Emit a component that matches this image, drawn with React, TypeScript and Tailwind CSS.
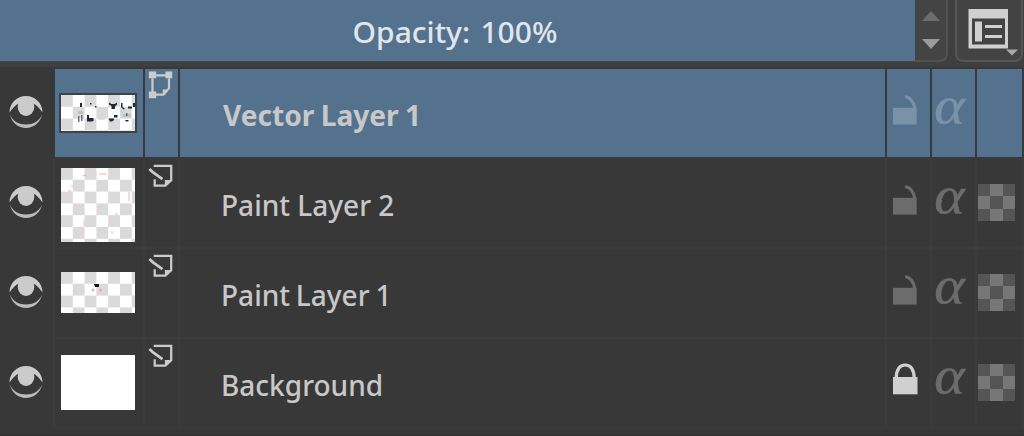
import clsx from 'clsx';
import type { ReactNode } from 'react';

type LayerKind = 'vector' | 'paint';

interface Layer {
  name: string;
  kind: LayerKind;
  selected?: boolean;
  locked?: boolean;
  thumb: ReactNode;
  nameClass: string;
}

function EyeIcon() {
  return (
    <svg aria-hidden="true" className="w-[34px] h-[34px] -mt-[2px]" viewBox="0 0 34 34" fill="none">
      <path d="M0.500 17.500C0.500 8 8 1 17 1s16.500 7 16.500 16.500C30 12.500 27.500 10 24 8.500H10C6.500 10 4 12.500 0.500 17.500z" fill="#cbcbcb" />
      <ellipse cx="17" cy="12" rx="8.300" ry="9" fill="#cbcbcb" />
      <path d="M0.800 19.500C3 28 9.500 33 17 33s14-5 16.200-13.500C30 26.500 24 29.500 17 29.500S4 26.500 0.800 19.500z" fill="#bcbcbc" />
    </svg>
  );
}

function VectorIcon() {
  return (
    <svg aria-hidden="true" className="w-[34px] h-[34px]" viewBox="0 0 34 34" fill="none">
      <path d="M8 6h17M7.700 9v16M24.700 9v10.500L19 26H10" stroke="#cbcbcb" strokeWidth="2.300" />
      <path d="M18.300 26v-5.500h6z" fill="#cbcbcb" />
      <path d="M4 2h7.500v7H4zM21 2h7v7h-7zM4 22.700h7.500v7H4z" fill="#cbcbcb" />
    </svg>
  );
}

function PaintIcon() {
  return (
    <svg aria-hidden="true" className="w-[34px] h-[34px]" viewBox="0 0 34 34" fill="none">
      <path d="M9 6.500h18v14.800l-6 5.500H10v-6.500" stroke="#cbcbcb" strokeWidth="2.300" />
      <path d="M20.500 27v-6H27z" fill="#cbcbcb" />
      <path d="M4.500 9.800L8 13l10 7.300" stroke="#cbcbcb" strokeWidth="2.800" />
    </svg>
  );
}

function LockIcon({ locked, selected }: { locked?: boolean; selected?: boolean }) {
  return (
    <svg
      aria-hidden="true"
      className={clsx('block w-[26px] h-[34px]', locked ? 'text-[#d0d0d0]' : selected ? 'text-[#7a91a8]' : 'text-[#6c6c6c]')}
      viewBox="0 0 26 34"
      fill="none"
    >
      {locked ? (
        <>
          <rect x="1" y="15" width="24.500" height="17.300" fill="currentColor" />
          <path d="M4.200 16C4.500 7 8 3 13.200 3s8.700 4 9 13" stroke="currentColor" strokeWidth="3.200" />
        </>
      ) : (
        <>
          <rect x="1" y="15.800" width="23.700" height="16.800" fill="currentColor" />
          <path d="M13.200 4.500c5 1 8.500 5 9.500 12" stroke="currentColor" strokeWidth="3.200" />
        </>
      )}
    </svg>
  );
}

function InheritIcon() {
  return (
    <div className="grid grid-cols-3 w-[37px] h-[37px] shrink-0 -mt-px">
      {[0, 1, 2, 3, 4, 5, 6, 7, 8].map(i => (
        <div key={i} className={i % 2 ? 'bg-[#777777]' : 'bg-[#555555]'} />
      ))}
    </div>
  );
}

// transparency grid behind every thumbnail
function Thumb({ id, height, className, children }: { id: string; height: number; className?: string; children?: ReactNode }) {
  return (
    <svg aria-hidden="true" className={clsx('shrink-0', className)} width={74} height={height} viewBox={`0 0 74 ${height}`}>
      <defs>
        <pattern id={id} width="23.600" height="23.600" patternUnits="userSpaceOnUse">
          <rect width="23.600" height="23.600" fill="#ffffff" />
          <path d="M0 0h11.800v11.800H0zM11.800 11.800h11.800v11.800H11.800z" fill="#dadada" />
        </pattern>
      </defs>
      <rect width="74" height={height} fill={`url(#${id})`} />
      {children}
    </svg>
  );
}

const layers: Layer[] = [
  {
    name: 'Vector Layer 1',
    kind: 'vector',
    selected: true,
    nameClass: 'font-bold scale-x-[0.98] ml-[43px] [word-spacing:-1px]',
    thumb: (
      <div className="flex border-2 border-[#3b4248] -mt-px">
        <Thumb id="grid-vector" height={36}>
          <g fill="#1f2a30">
            <path d="M19 8h2v4h-2zM29 8h1.500v1.500H29zM34 11h1.500v1.500H34zM48 7.500l2.500 1.500h3L56 7.500v2l-2 2V14h-3.500v-3L48 9.500zM60 8h1.500v4l2.500 2-1.500.5-2.500-2.500zM67 11.500h4v2h-4zM72 8h2v4h-2z" />
            <path d="M26 20h2v3h4.500v3l-2 .5H26zM53 20h3.500v2.500H53zM47.500 23.500H53V25l-2 1.500h-2zM64 25h3.500v1.500H65z" />
          </g>
          <path d="M17 16h5v3h-5zM62 19h8v3h-8z" fill="#b9c1c5" />
          <path d="M17 21h1.500v6H17zM20 20h1.500v6H20zM65 18h1.500v3H65z" fill="#66727a" />
          <path d="M37 24h7M60 17h4M67 22h3" stroke="#c3c7ca" />
        </Thumb>
      </div>
    ),
  },
  {
    name: 'Paint Layer 2',
    kind: 'paint',
    nameClass: 'font-medium scale-x-[0.977] ml-[41px]',
    thumb: (
      <Thumb id="grid-paint2" height={74} className="mt-[3px]">
        <path d="M31 5h5M38 6h8M10 18h4M7 23h3M68 24v9M23 52v6M20 63v6M51 63v3M49 50v5M54 46h3M61 13h4M5 28v4M14 38v4" stroke="#f9cbc8" strokeWidth="1.500" />
        <path d="M22 8l3-1" stroke="#d9aaa8" />
      </Thumb>
    ),
  },
  {
    name: 'Paint Layer 1',
    kind: 'paint',
    nameClass: 'font-medium scale-x-[0.977] ml-[41px] [word-spacing:-1.5px]',
    thumb: (
      <Thumb id="grid-paint1" height={41} className="-mt-px">
        <path d="M33 12h5v3h-4z" fill="#141414" />
        <circle cx="32" cy="18" r="1.500" fill="#f2a8da" />
        <circle cx="39.500" cy="18" r="1.500" fill="#e3a5d0" />
      </Thumb>
    ),
  },
  {
    name: 'Background',
    kind: 'paint',
    locked: true,
    nameClass: 'font-medium scale-x-[0.977] ml-[41px]',
    thumb: <div className="w-[74px] h-[55px] -mt-px bg-white" />,
  },
];

function LayerRow({ layer }: { layer: Layer }) {
  const cell = clsx('flex items-center justify-center h-full shrink-0', layer.selected ? 'bg-[#54728e]' : 'bg-[#383838]');

  return (
    <div className={clsx('flex h-[90px] pt-px pb-px gap-[2px] pr-[2px]', layer.selected ? 'bg-[#353a3e]' : 'bg-[#3b3b3b]')}>
      <div className="flex items-center justify-center w-[53px] -my-px pr-px bg-[#383838] shrink-0">
        <EyeIcon />
      </div>
      <div className={clsx(cell, 'w-[88px] pr-[2px]')}>{layer.thumb}</div>
      <div className={clsx(cell, 'w-[33px] items-start')}>
        {layer.kind === 'vector' ? <VectorIcon /> : <PaintIcon />}
      </div>
      <div className={clsx(cell, 'flex-1 justify-start')}>
        <span className={clsx('origin-left whitespace-nowrap text-[28.7px] leading-10 text-[#c8c8c8] mt-[3px]', layer.nameClass)}>
          {layer.name}
        </span>
      </div>
      <div className={clsx(cell, 'w-[43px]')}>
        <span className="-mt-[9px] -ml-[8px]">
          <LockIcon locked={layer.locked} selected={layer.selected} />
        </span>
      </div>
      <div className={clsx(cell, 'w-[43px]')}>
        <span
          className={clsx(
            "font-['Liberation_Serif'] italic text-[58px] leading-[60px] scale-y-[0.9] -mt-[14px] -ml-[8px] [-webkit-text-stroke:0.6px_currentColor]",
            layer.selected ? 'text-[#7a91a8]' : 'text-[#6c6c6c]',
          )}
        >
          α
        </span>
      </div>
      <div className={clsx(cell, 'w-[45px] pr-[6px]')}>{!layer.selected && <InheritIcon />}</div>
    </div>
  );
}

export default function App() {
  return (
    <div className="w-[1024px] h-[436px] overflow-hidden bg-[#383838] font-['Noto_Sans',sans-serif]">
      <div className="flex h-[68px] bg-[#3f3f3f] border-b border-[#373737]">
        <div className="flex items-center justify-center w-[915px] h-[62px] bg-[#54728e] border-b border-[#3c4a56]">
          <span className="text-[28.7px] leading-10 font-medium text-[#e0e6ec] whitespace-pre scale-x-[1.045] [word-spacing:-2.5px] mt-[3px] -ml-[4px]">{'Opacity:  100%'}</span>
        </div>
        <div className="flex flex-col items-center w-[33px] h-[62px] border-r-2 border-b-2 border-[#525252] rounded-br-lg bg-[#444444] pt-[11px] gap-[18px]">
          <svg aria-hidden="true" width="18" height="10" viewBox="0 0 18 10"><path d="M0 10L9 0l9 10z" fill="#6c6c6c" /></svg>
          <svg aria-hidden="true" width="18" height="10" viewBox="0 0 18 10"><path d="M0 0h18L9 10z" fill="#9b9b9b" /></svg>
        </div>
        <div className="flex w-[68px] h-[62px] ml-[7px] border-2 border-t-0 border-[#555555] rounded-b-lg bg-[#434343]">
          <svg aria-hidden="true" className="w-[64px] h-[60px]" viewBox="957 0 64 60">
            <path d="M968.500 9h39.500v39.500h-39.500z" fill="#d0d0d0" />
            <path d="M972 18.500h33v26h-33z" fill="#434343" />
            <path d="M975 21.500h7v20h-7zM985 25h17v3h-17zM985 35h17v3h-17z" fill="#d0d0d0" />
            <path d="M1006 49.500h12l-6 6z" fill="#a8a8a8" />
          </svg>
        </div>
      </div>
      <div className="flex flex-col">
        {layers.map(layer => (
          <LayerRow key={layer.name} layer={layer} />
        ))}
      </div>
      <div className="h-2 bg-[#383838] border-b-2 border-[#313131]" />
    </div>
  );
}
